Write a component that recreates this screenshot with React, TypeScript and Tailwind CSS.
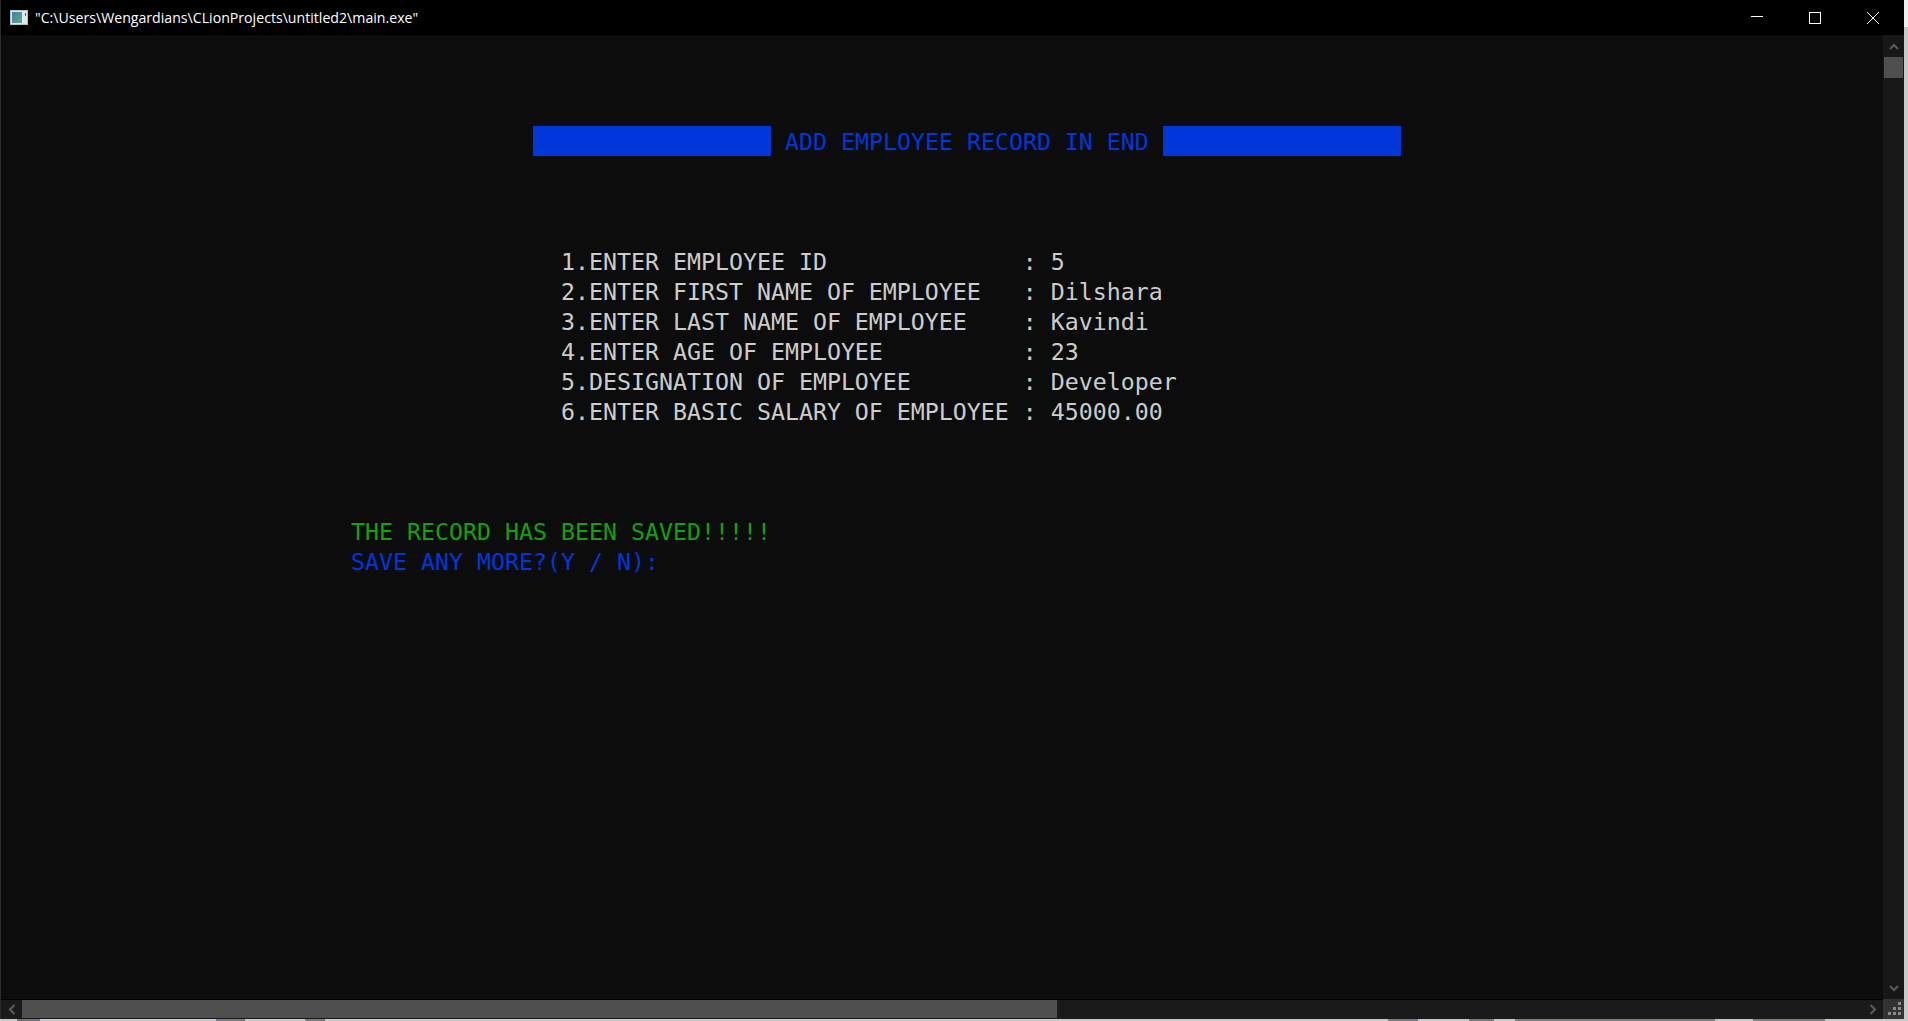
const pad = (n: number) => " ".repeat(n)

const fields = [
  ["1.ENTER EMPLOYEE ID              ", "5"],
  ["2.ENTER FIRST NAME OF EMPLOYEE   ", "Dilshara"],
  ["3.ENTER LAST NAME OF EMPLOYEE    ", "Kavindi"],
  ["4.ENTER AGE OF EMPLOYEE          ", "23"],
  ["5.DESIGNATION OF EMPLOYEE        ", "Developer"],
  ["6.ENTER BASIC SALARY OF EMPLOYEE ", "45000.00"],
]

function AppIcon() {
  return (
    <svg width="18" height="15" viewBox="0 0 18 15">
      <defs>
        <linearGradient id="pane" x1="0" y1="0" x2="1" y2="1">
          <stop offset="0" stopColor="#3f7fb5" />
          <stop offset="1" stopColor="#58b07a" />
        </linearGradient>
      </defs>
      <rect width="18" height="15" fill="#b9bec4" />
      <rect x="1" y="1" width="16" height="13" fill="#e6e8ea" />
      <rect x="2" y="2" width="10" height="11" fill="url(#pane)" />
      <rect x="15" y="3" width="1" height="3" fill="#4a5a6a" />
    </svg>
  )
}

function CaptionButtons() {
  return (
    <div className="flex mr-[2px]">
      <div className="w-[58px] h-[35px] flex items-center justify-center">
        <svg width="12" height="12" viewBox="0 0 12 12" className="mt-[-2px] ml-[-1px]">
          <path d="M0 5.5H12" stroke="#fff" strokeWidth="1" />
        </svg>
      </div>
      <div className="w-[58px] h-[35px] flex items-center justify-center">
        <svg width="12" height="12" viewBox="0 0 12 12">
          <rect x="0.5" y="0.5" width="11" height="11" fill="none" stroke="#fff" strokeWidth="1" />
        </svg>
      </div>
      <div className="w-[58px] h-[35px] flex items-center justify-center">
        <svg width="12" height="12" viewBox="0 0 12 12">
          <path d="M0 0L12 12M12 0L0 12" stroke="#fff" strokeWidth="1" />
        </svg>
      </div>
    </div>
  )
}

function Chevron({ d, w, h }: { d: string; w: number; h: number }) {
  return (
    <svg width={w} height={h} viewBox={`0 0 ${w} ${h}`}>
      <path d={d} fill="none" stroke="#5c5c5c" strokeWidth="2" />
    </svg>
  )
}

function BlueBar() {
  return <span className="inline-block align-top w-[238px] h-[30px] bg-[#0037da]" />
}

function Console() {
  return (
    <div className="flex-1 min-w-0 bg-[#0c0c0c] pt-px font-['DejaVu_Sans_Mono',monospace] text-[23.25px] leading-[32px] text-[#cccccc] whitespace-pre overflow-hidden">
      <div className="h-[30px] mt-[90px]">
        {pad(38)}
        <BlueBar />
        <span className="text-[#0037da]"> ADD EMPLOYEE RECORD IN END </span>
        <BlueBar />
      </div>
      <div className="mt-[90px]">
        {fields.map(([label, value]) => (
          <div key={label} className="h-[30px]">
            {pad(40)}
            {label}: {value}
          </div>
        ))}
      </div>
      <div className="h-[30px] mt-[90px] text-[#13a10e]">{pad(25)}THE RECORD HAS BEEN SAVED!!!!!</div>
      <div className="h-[30px] text-[#0037da]">{pad(25)}SAVE ANY MORE?(Y / N):</div>
    </div>
  )
}

function VerticalScrollbar() {
  return (
    <div className="w-[21px] shrink-0 bg-[#171717] flex flex-col items-center">
      <div className="h-[22px] w-full flex items-center justify-center">
        <Chevron w={10} h={7} d="M1 6L5 2L9 6" />
      </div>
      <div className="w-[19px] h-[21px] bg-[#4f4f4f]" />
      <div className="flex-1" />
      <div className="h-[22px] w-full flex items-center justify-center">
        <Chevron w={10} h={7} d="M1 1L5 5L9 1" />
      </div>
    </div>
  )
}

function Grip() {
  return (
    <svg width="15" height="15" viewBox="0 0 15 15">
      <path
        d="M12 0h3v3h-3zM7 5h3v3H7zM12 5h3v3h-3zM2 10h3v3H2zM7 10h3v3H7zM12 10h3v3h-3z"
        fill="#8a8a8a"
      />
    </svg>
  )
}

function HorizontalScrollbar() {
  return (
    <div className="h-[20px] flex shrink-0">
      <div className="flex-1 flex items-stretch bg-[#1a1a1a] border-t border-black">
        <div className="w-[21px] flex items-center justify-center">
          <Chevron w={8} h={11} d="M6.5 1L2 5.5L6.5 10" />
        </div>
        <div className="w-[1035px] bg-[#4f4f4f] mb-px" />
        <div className="flex-1" />
        <div className="w-[21px] flex items-center justify-center">
          <Chevron w={8} h={11} d="M1.5 1L6 5.5L1.5 10" />
        </div>
      </div>
      <div className="w-[21px] bg-[#333333] flex items-end justify-end pr-[3px] pb-[2px]">
        <Grip />
      </div>
    </div>
  )
}

// scraps of the window behind, cut off by the bottom edge of the console
function BehindWindowStrip() {
  return (
    <div className="h-[2px] flex bg-[#c9c9c9]">
      <span className="ml-[17px] w-[23px] bg-[#77727f]" />
      <span className="ml-[176px] w-[29px] bg-[#7a7a86]" />
      <span className="ml-[60px] w-[20px] bg-[#7a7a86]" />
      <span className="ml-[1063px] w-[30px] bg-[#7a7a86]" />
      <span className="ml-[51px] w-[25px] bg-[#7a7a86]" />
      <span className="ml-[21px] w-[200px] bg-[#7d7d88]" />
      <span className="ml-[38px] w-[72px] bg-[#7d7d88]" />
    </div>
  )
}

export default function App() {
  return (
    <div className="w-[1908px] h-[1021px] flex overflow-hidden">
      <div className="w-[1904px] flex flex-col">
        <div className="h-[1019px] flex flex-col border-l border-[#2a2a2a]">
          <div className="h-[35px] shrink-0 bg-black flex items-center justify-between">
            <div className="flex items-center">
              <div className="ml-[9px] mr-[7px] flex">
                <AppIcon />
              </div>
              <span className="font-['Open_Sans',sans-serif] text-[14.15px] text-white whitespace-pre">
                "C:\Users\Wengardians\CLionProjects\untitled2\main.exe"
              </span>
            </div>
            <CaptionButtons />
          </div>
          <div className="flex-1 min-h-0 flex">
            <Console />
            <VerticalScrollbar />
          </div>
          <HorizontalScrollbar />
        </div>
        <BehindWindowStrip />
      </div>
      <div className="flex-1 flex flex-col">
        <div className="h-[27px] bg-[#efefef]" />
        <div className="flex-1 bg-[#c9c9c9]" />
      </div>
    </div>
  )
}
